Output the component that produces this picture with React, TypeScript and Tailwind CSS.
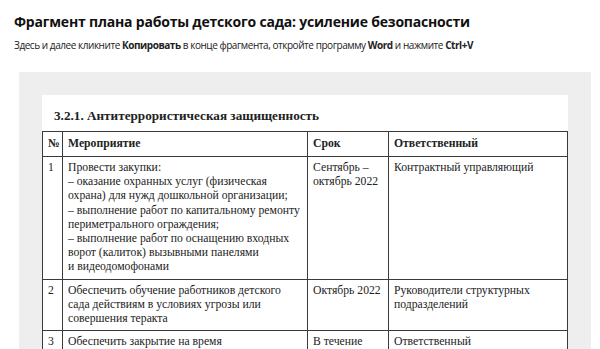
export default function App() {
  const rows = [
    {
      n: "1",
      what: [
        "Провести закупки:",
        "– оказание охранных услуг (физическая",
        "охрана) для нужд дошкольной организации;",
        "– выполнение работ по капитальному ремонту",
        "периметрального ограждения;",
        "– выполнение работ по оснащению входных",
        "ворот (калиток) вызывными панелями",
        "и видеодомофонами",
      ],
      when: ["Сентябрь –", "октябрь 2022"],
      who: ["Контрактный управляющий"],
    },
    {
      n: "2",
      what: ["Обеспечить обучение работников детского", "сада действиям в условиях угрозы или", "совершения теракта"],
      when: ["Октябрь 2022"],
      who: ["Руководители структурных", "подразделений"],
    },
    {
      n: "3",
      what: ["Обеспечить закрытие на время", "образовательного процесса всех входов"],
      when: ["В течение", "года"],
      who: ["Ответственный", "за безопасность"],
    },
  ];

  const cell = "border-[1.5px] border-[#3a3a3a] px-[5px] text-left";

  return (
    <div className="w-[600px] h-[349px] overflow-hidden bg-white font-['Open_Sans',sans-serif] text-[#111]">
      <div className="px-[14px] pt-[11px]">
        <h1 className="text-[14px] leading-[22px] font-bold tracking-[-0.2px]">
          Фрагмент плана работы детского сада: усиление безопасности
        </h1>
        <p className="mt-[1px] text-[10px] leading-[22px] tracking-[-0.45px] text-[#222]">
          Здесь и далее кликните <b>Копировать</b> в конце фрагмента, откройте программу <b>Word</b> и нажмите{" "}
          <b>Ctrl+V</b>
        </p>
      </div>

      <div className="ml-[19px] mr-[9px] mt-[16px] bg-[#eeeeee] px-[23px] pt-[23px] h-[300px]">
        <div className="bg-white font-['Liberation_Serif',serif] text-[11.7px] leading-[14.2px] text-[#222]">
          <div className="pl-[12px] pt-[14px] pb-[8px] font-bold text-[13.2px] leading-[14px]">
            3.2.1. Антитеррористическая защищенность
          </div>
          <table className="w-full table-fixed border-collapse">
            <colgroup>
              <col className="w-[20px]" />
              <col className="w-[245px]" />
              <col className="w-[81px]" />
              <col />
            </colgroup>
            <thead>
              <tr className="h-[25px]">
                <th className={`${cell} font-bold`}>№</th>
                <th className={`${cell} font-bold`}>Мероприятие</th>
                <th className={`${cell} font-bold`}>Срок</th>
                <th className={`${cell} font-bold`}>Ответственный</th>
              </tr>
            </thead>
            <tbody>
              {rows.map((r) => (
                <tr key={r.n} className="align-top">
                  <td className={`${cell} pt-[4px] pb-[4px]`}>{r.n}</td>
                  {[r.what, r.when, r.who].map((lines, i) => (
                    <td key={i} className={`${cell} pt-[4px] pb-[4px]`}>
                      {lines.map((l) => (
                        <div key={l} className="whitespace-nowrap">
                          {l}
                        </div>
                      ))}
                    </td>
                  ))}
                </tr>
              ))}
            </tbody>
          </table>
        </div>
      </div>
    </div>
  );
}
